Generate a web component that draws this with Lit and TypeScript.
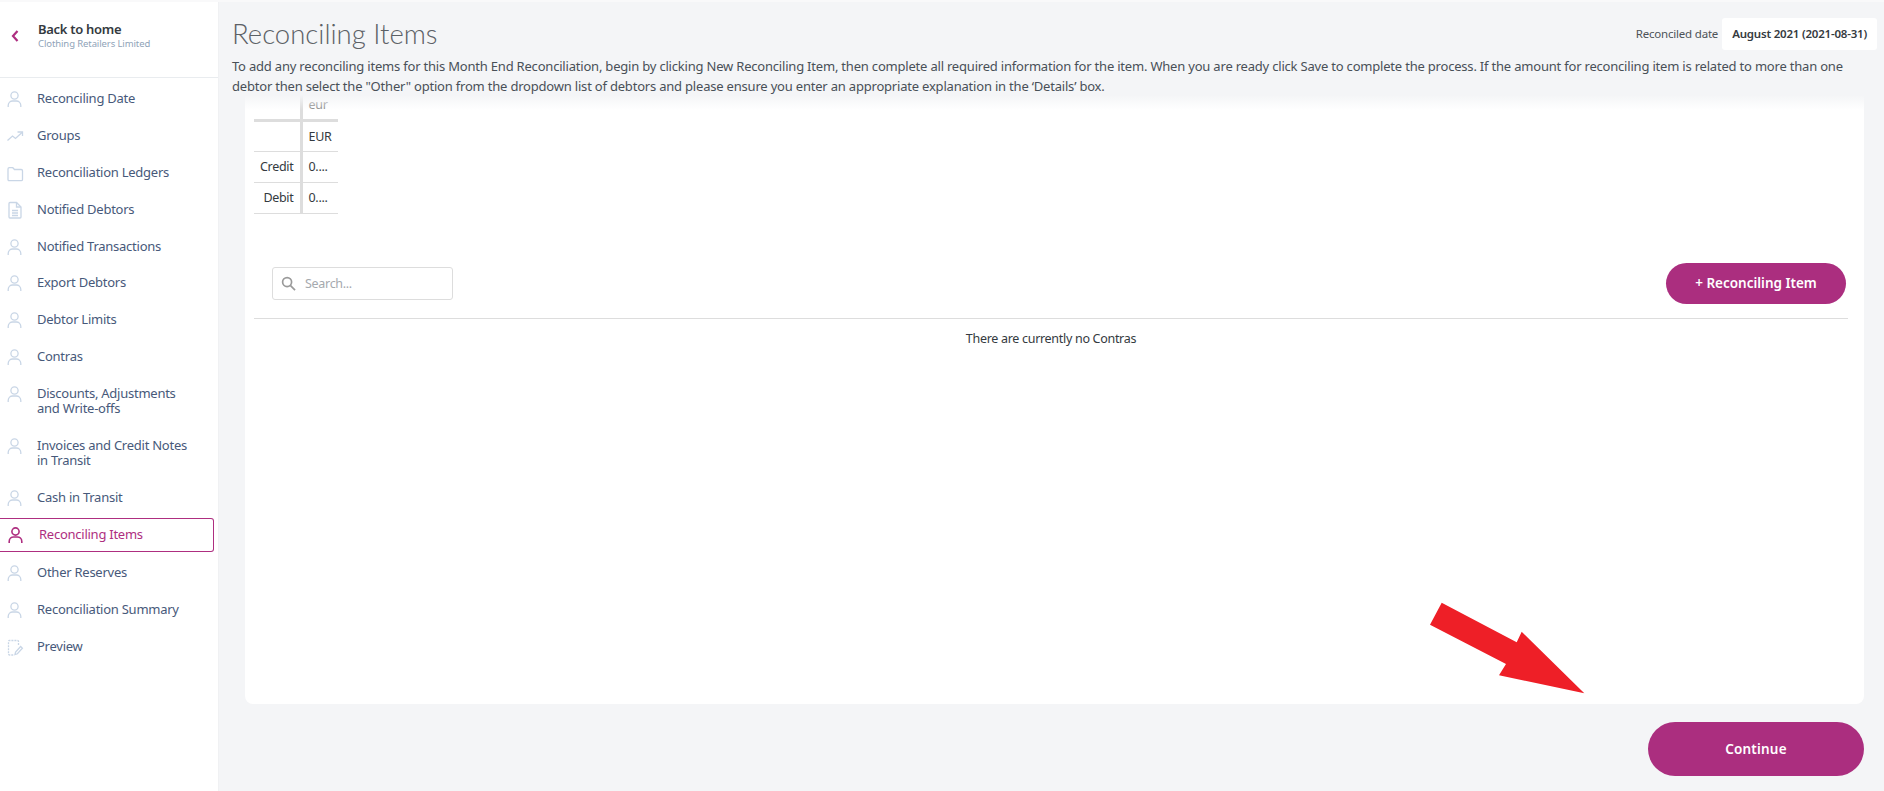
import { LitElement, html, css, svg } from "lit";
import { customElement } from "lit/decorators.js";

const person = svg`<circle cx="7.5" cy="5.5" r="3.6"/><path d="M1.2 17v-1.5c0-3 2.3-4.5 4.3-4.5h4c2 0 4.3 1.500 4.300 4.500V17"/>`;
const trend = svg`<path d="M.5 13.500l5-4.500 3 2.500 6.500-6"/><path d="M10.500 5h5v4"/>`;
const folder = svg`<path d="M1 5c0-.8.5-1.300 1.300-1.300h3.500l1.700 1.800h6.700c.8 0 1.300.5 1.300 1.300v8.700c0 .8-.5 1.200-1.300 1.200H2.300c-.8 0-1.300-.4-1.300-1.200z"/>`;
const file = svg`<path d="M2 2.500c0-.6.4-1 1-1h6.500L14 6v10c0 .6-.4 1-1 1H3c-.6 0-1-.4-1-1z"/><path d="M9.500 1.500V6H14M5 9.500h6M5 12h6M5 14.500h6"/>`;
const note = svg`<path d="M11.500 7V3.500c0-.6-.4-1-1-1H2.500c-.6 0-1 .4-1 1V16c0 .6.4 1 1 1H7" stroke-dasharray="2 1"/><path d="M8 16.500l.6-2.500 5-5.500 1.800 1.800-5 5.500z"/>`;

const items = [
  ["Reconciling Date", person], ["Groups", trend], ["Reconciliation Ledgers", folder],
  ["Notified Debtors", file], ["Notified Transactions", person], ["Export Debtors", person],
  ["Debtor Limits", person], ["Contras", person], ["Discounts, Adjustments and Write-offs", person],
  ["Invoices and Credit Notes in Transit", person], ["Cash in Transit", person],
  ["Reconciling Items", person, true], ["Other Reserves", person], ["Reconciliation Summary", person], ["Preview", note],
] as const;

@customElement("app-root")
export class AppRoot extends LitElement {
  static styles = css`
    :host { display: flex; width: 1884px; height: 791px; box-sizing: border-box; border-top: 2px solid #f9f9fa; overflow: hidden; position: relative; background: #f4f5f7; font-family: "Noto Sans", sans-serif; color: #343a40; }
    .side { width: 219px; flex: none; background: #fff; border-right: 1px solid #f0f1f3; box-sizing: border-box; }
    .back { height: 76px; box-sizing: border-box; border-bottom: 1px solid #e9ecef; display: flex; padding: 19px 0 0 10px; }
    .back svg { width: 10px; height: 14px; margin: 8px 18px 0 0; fill: none; stroke: #ae2e80; stroke-width: 2.2; }
    .back b { display: block; font-size: 13px; line-height: 16px; font-weight: 600; color: #343a40; letter-spacing: -.3px; }
    .back small { display: block; font-size: 9.500px; line-height: 14px; color: #8fa3b8; letter-spacing: -.1px; }
    nav { display: flex; flex-direction: column; padding-top: 2px; }
    .item { display: flex; align-items: flex-start; padding: 11px 10px 10.900px 7px; font-size: 13px; line-height: 15px; color: #47597a; letter-spacing: -.25px; width: 200px; box-sizing: border-box; }
    .item svg { width: 18px; height: 18px; flex: none; margin: -1px 12px -2px 0; fill: none; stroke: #c9d6e6; stroke-width: 1.300; }
    .item.active { border: 1px solid #ae2e80; border-left: none; border-radius: 0 3px 3px 0; width: 214px; color: #ae2e80; margin: 2px 0; padding: 8px 10px 9px 8px; }
    .item.active svg { stroke: #ae2e80; stroke-width: 1.600; margin-right: 13px; }
    main { flex: 1; min-width: 0; display: flex; flex-direction: column; position: relative; padding: 0 20px 0 0; }
    header { padding: 0 0 0 13px; height: 93px; box-sizing: border-box; flex: none; position: relative; z-index: 1; }
    .top { display: flex; align-items: center; justify-content: space-between; height: 54px; margin-right: -13px; padding-top: 9px; box-sizing: border-box; }
    h1 { margin: 0; font-size: 27.500px; font-weight: 300; color: #5c6166; font-family: "Lato", sans-serif; }
    .date { display: flex; align-items: center; font-size: 11.500px; color: #4d5358; letter-spacing: -.2px; }
    .date b { background: #fff; border-radius: 3px; padding: 0 10px; height: 32px; line-height: 32px; margin-left: 4px; color: #343a40; font-weight: 600; font-size: 11.500px; }
    .intro { margin: 0; font-size: 13px; line-height: 20px; letter-spacing: -.2px; color: #495057; white-space: nowrap; }
    .fade { position: absolute; left: 0; right: -20px; bottom: -15px; height: 15px; background: linear-gradient(#f4f5f7, rgba(244,245,247,0)); }
    .card { margin-left: 26px; height: 609px; flex: none; background: #fff; border-radius: 0 0 8px 8px; padding: 0 16px 0 9px; box-sizing: border-box; overflow: hidden; }
    table { border-collapse: collapse; font-size: 12.500px; letter-spacing: -.3px; margin-top: -4px; }
    td { height: 31px; padding: 0 6px; border-bottom: 1px solid #ddd; box-sizing: border-box; }
    td:first-child { width: 47px; text-align: right; border-right: 3px solid #ddd; }
    td:last-child { width: 37px; }
    tr.h td { height: 29px; border-bottom-width: 3px; color: #888; }
    .tools { display: flex; align-items: center; justify-content: space-between; margin: 49px 2px 14px 18px; }
    .search { width: 181px; height: 33px; box-sizing: border-box; border: 1px solid #ddd; border-radius: 3px; display: flex; align-items: center; gap: 9px; padding-left: 8px; font-size: 12.500px; color: #a5a9ae; letter-spacing: -.3px; }
    .search svg { width: 15px; height: 15px; fill: none; stroke: #9a9a9a; stroke-width: 1.800; }
    .btn { background: #ab2e7f; color: #fff; border-radius: 27px; display: flex; align-items: center; justify-content: center; font-weight: 600; }
    .add { width: 180px; height: 41px; font-size: 13.500px; letter-spacing: 0; }
    .line { border-top: 1px solid #ddd; }
    .none { text-align: center; font-size: 12.500px; letter-spacing: -.3px; margin-top: 11px; color: #343a40; }
    .foot { display: flex; justify-content: flex-end; margin-top: 18px; }
    .cont { width: 216px; height: 54px; font-size: 13.500px; letter-spacing: .2px; }
    .arrow { position: absolute; left: 1420px; top: 593px; width: 175px; height: 105px; }
    .arrow polygon { fill: #ee1f27; }
  `;
  render() {
    return html`
      <aside class="side">
        <div class="back">
          <svg viewBox="0 0 10 14"><path d="M7.500 2L3 7l4.500 5"/></svg>
          <div><b>Back to home</b><small>Clothing Retailers Limited</small></div>
        </div>
        <nav>
          ${items.map(([t, ic, a]: any) => html`
            <div class="item ${a ? "active" : ""}">
              <svg viewBox="0 0 18 18">${ic}</svg><span>${t}</span>
            </div>`)}
        </nav>
      </aside>
      <main>
        <header>
          <div class="top"><h1>Reconciling Items</h1><div class="date">Reconciled date <b>August 2021 (2021-08-31)</b></div></div>
          <p class="intro">To add any reconciling items for this Month End Reconciliation, begin by clicking New Reconciling Item, then complete all required information for the item. When you are ready click Save to complete the process. If the amount for reconciling item is related to more than one<br>debtor then select the "Other" option from the dropdown list of debtors and please ensure you enter an appropriate explanation in the ‘Details’ box.</p>
          <div class="fade"></div>
        </header>
        <section class="card">
          <table>
            <tr class="h"><td></td><td>eur</td></tr>
            <tr><td></td><td>EUR</td></tr>
            <tr><td>Credit</td><td>0....</td></tr>
            <tr><td>Debit</td><td>0....</td></tr>
          </table>
          <div class="tools">
            <div class="search"><svg viewBox="0 0 16 16"><circle cx="6.500" cy="6.500" r="4.800"/><path d="M10.200 10.200L15 15"/></svg>Search...</div>
            <div class="btn add">+ Reconciling Item</div>
          </div>
          <div class="line"></div>
          <div class="none">There are currently no Contras</div>
        </section>
        <div class="foot"><div class="btn cont">Continue</div></div>
      </main>
      <svg class="arrow" viewBox="1420 595 175 105"><polygon points="1441.7,602.7 1430,624.7 1506,664 1499,675.3 1584.3,693.3 1521.7,631.7 1516.7,642.3"/></svg>
    `;
  }
}
